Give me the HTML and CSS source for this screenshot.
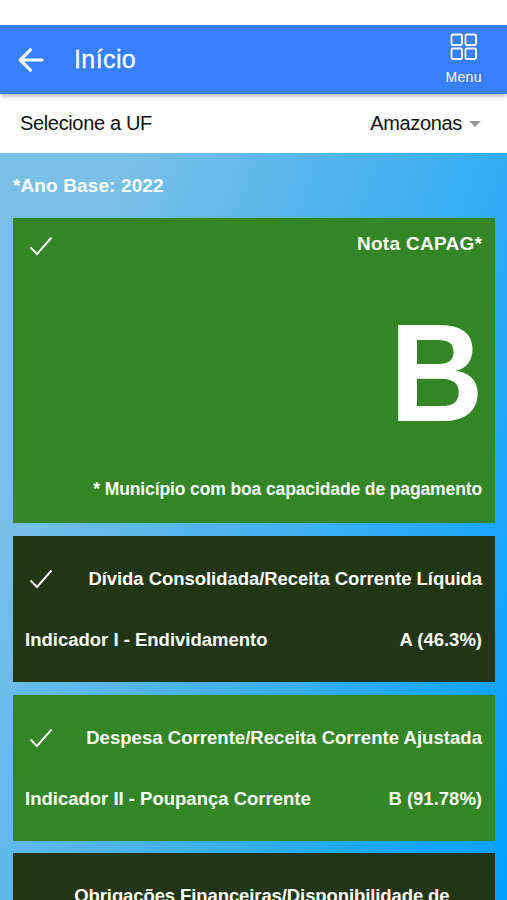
FILE: index.html
```html
<!DOCTYPE html>
<html lang="pt-BR">
<head>
    <meta charset="utf-8">
    <meta name="viewport" content="width=device-width, initial-scale=1">
    <title>Início</title>
    <link rel="stylesheet" href="styles.css">
</head>
<body>
    <!-- Top toolbar -->
    <header class="toolbar">
        <svg class="back-icon" viewBox="0 0 28 26">
            <path d="M13.5 2.8L3.2 13L13.5 23.2M3.7 13H25"/>
        </svg>
        <h1 class="title">Início</h1>
        <div class="menu">
            <svg class="menu-icon" viewBox="0 0 28 28">
                <rect x="1.5" y="1.5" width="10.5" height="10.5" rx="1.2"/>
                <rect x="15.5" y="1.5" width="10.5" height="10.5" rx="1.2"/>
                <rect x="1.5" y="15.5" width="10.5" height="10.5" rx="1.2"/>
                <rect x="15.5" y="15.5" width="10.5" height="10.5" rx="1.2"/>
            </svg>
            <span class="menu-label">Menu</span>
        </div>
    </header>

    <!-- State selector -->
    <div class="select-row">
        <span class="select-label">Selecione a UF</span>
        <span class="select-value">Amazonas</span>
        <span class="caret"></span>
    </div>

    <main class="content">
        <p class="base-year">*Ano Base: 2022</p>

        <!-- Final grade -->
        <section class="card card-grade green">
            <div class="card-top">
                <svg class="check" viewBox="0 0 24 20"><path d="M1.5 11.5L8 18L22.5 1.5"/></svg>
                <h2 class="card-title">Nota CAPAG*</h2>
            </div>
            <div class="grade">B</div>
            <p class="grade-note">* Município com boa capacidade de pagamento</p>
        </section>

        <!-- Indicators -->
        <section class="card dark">
            <div class="card-top">
                <svg class="check" viewBox="0 0 24 20"><path d="M1.5 11.5L8 18L22.5 1.5"/></svg>
                <h2 class="card-title title-debt">Dívida Consolidada/Receita Corrente Líquida</h2>
            </div>
            <div class="indicator">
                <span>Indicador I - Endividamento</span>
                <span>A (46.3%)</span>
            </div>
        </section>

        <section class="card green">
            <div class="card-top">
                <svg class="check" viewBox="0 0 24 20"><path d="M1.5 11.5L8 18L22.5 1.5"/></svg>
                <h2 class="card-title title-expense">Despesa Corrente/Receita Corrente Ajustada</h2>
            </div>
            <div class="indicator">
                <span>Indicador II - Poupança Corrente</span>
                <span>B (91.78%)</span>
            </div>
        </section>

        <section class="card dark">
            <h2 class="card-title title-long">Obrigações Financeiras/Disponibilidade de</h2>
        </section>
    </main>
</body>
</html>
```
FILE: styles.css
```css
* {
    box-sizing: border-box;
}

body {
    display: flex;
    flex-direction: column;
    height: 100vh;
    margin: 0;
    padding-top: 25px;
    overflow: hidden;
    background: #fff;
    font-family: "Liberation Sans", Arial, sans-serif;
}

h1, h2, p {
    margin: 0;
}

svg {
    display: block;
    fill: none;
    stroke: #fff;
}

/* Toolbar */
.toolbar {
    display: flex;
    flex: none;
    align-items: center;
    height: 69px;
    padding: 0 25px 0 17px;
    background: #387ffe;
    color: #fff;
    box-shadow: 0 3px 4px -1px rgba(0, 0, 0, 0.3);
    z-index: 1;
}

.back-icon {
    width: 28px;
    height: 26px;
    stroke-width: 3.2;
    stroke-linecap: round;
    stroke-linejoin: round;
}

.title {
    margin-left: 29px;
    font-size: 25px;
    font-weight: normal;
    letter-spacing: 0.4px;
    -webkit-text-stroke: 0.3px #fff;
}

.menu {
    display: flex;
    flex-direction: column;
    align-items: center;
    margin-left: auto;
}

.menu-icon {
    width: 28px;
    height: 28px;
    stroke-width: 1.8;
}

.menu-label {
    margin-top: 7px;
    font-size: 14px;
    line-height: 18px;
    letter-spacing: 0.4px;
}

/* UF select */
.select-row {
    display: flex;
    flex: none;
    align-items: center;
    height: 59px;
    padding: 0 26px 0 20px;
    color: #111;
    font-size: 20px;
    letter-spacing: -0.35px;
}

.select-value {
    margin-left: auto;
}

.caret {
    margin-left: 7px;
    border: 6px solid transparent;
    border-top-color: #999;
    border-bottom: 0;
}

/* Scroll area */
.content {
    flex: 1;
    min-height: 0;
    padding: 0 12.5px 0 13px;
    overflow: hidden;
    background: linear-gradient(110deg, #7ac0e6 16%, #00a0ff);
    color: #fff;
    font-weight: bold;
}

.base-year {
    height: 65.3px;
    font-size: 19px;
    line-height: 66px;
    letter-spacing: 0.12px;
}

.card {
    height: 146.3px;
    margin-bottom: 12.5px;
    padding: 30px 12.5px 0 12px;
}

.green {
    background: #338526;
}

.dark {
    background: #223616;
}

.card-top {
    display: flex;
    align-items: center;
    justify-content: space-between;
    height: 26px;
    padding-left: 4px;
}

.check {
    width: 24px;
    height: 20px;
    stroke-width: 1.9;
}

.card-title {
    font-size: 18.5px;
    line-height: 26px;
    white-space: nowrap;
}

.title-debt {
    letter-spacing: -0.05px;
}

.title-expense {
    letter-spacing: 0.04px;
}

.indicator {
    display: flex;
    justify-content: space-between;
    margin-top: 35px;
    font-size: 18.5px;
    line-height: 26px;
}

/* Grade card */
.card-grade {
    height: 305px;
    padding-top: 13px;
}

.card-grade .check {
    margin-top: 4px;
}

.card-grade .card-title {
    font-size: 19px;
    letter-spacing: 0.3px;
    margin-right: -0.3px;
}

.grade {
    height: 206px;
    margin-right: -1.5px;
    padding-top: 36px;
    font-size: 140px;
    line-height: 160px;
    text-align: right;
    transform: scaleX(0.93);
    transform-origin: right;
}

.grade-note {
    margin-top: 13px;
    font-size: 17.5px;
    line-height: 26px;
    letter-spacing: -0.12px;
    text-align: right;
}

.title-long {
    padding-right: 32.5px;
    letter-spacing: -0.1px;
    text-align: right;
}
```
